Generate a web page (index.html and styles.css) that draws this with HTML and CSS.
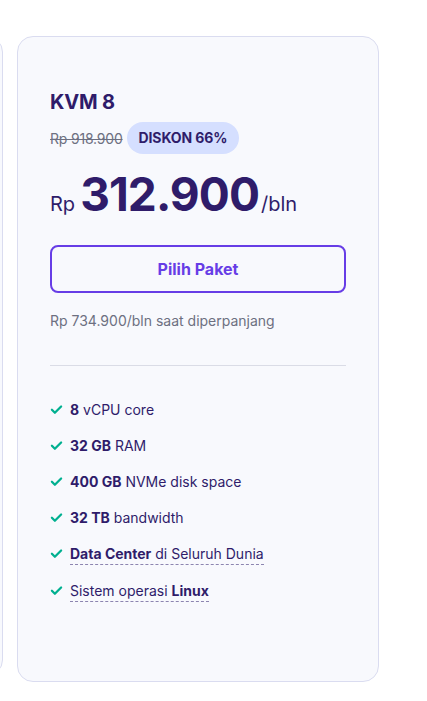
FILE: index.html
```html
<!DOCTYPE html>
<html lang="id">
<head>
<meta charset="utf-8">
<link rel="stylesheet" href="styles.css">
</head>
<body>
<div class="track">
  <div class="card card-prev"></div>
  <div class="card">
    <h2 class="title">KVM 8</h2>
    <div class="discount-row">
      <span class="old-price">Rp 918.900</span>
      <span class="badge">DISKON 66%</span>
    </div>
    <div class="price">
      <span class="cur">Rp</span><span class="amount">312.900</span><span class="per">/bln</span>
    </div>
    <button class="btn">Pilih Paket</button>
    <p class="renew">Rp 734.900/bln saat diperpanjang</p>
    <hr class="divider">
    <ul class="features">
      <li><svg class="check" viewBox="0 0 24 24"><path d="M3.5 12.5l5.5 5.5L20.5 6.5" /></svg><span><b>8</b> vCPU core</span></li>
      <li><svg class="check" viewBox="0 0 24 24"><path d="M3.5 12.5l5.5 5.5L20.5 6.5" /></svg><span><b>32 GB</b> RAM</span></li>
      <li><svg class="check" viewBox="0 0 24 24"><path d="M3.5 12.5l5.5 5.5L20.5 6.5" /></svg><span><b>400 GB</b> NVMe disk space</span></li>
      <li><svg class="check" viewBox="0 0 24 24"><path d="M3.5 12.5l5.5 5.5L20.5 6.5" /></svg><span><b>32 TB</b> bandwidth</span></li>
      <li><svg class="check" viewBox="0 0 24 24"><path d="M3.5 12.5l5.5 5.5L20.5 6.5" /></svg><span class="dashed"><b>Data Center</b> di Seluruh Dunia</span></li>
      <li><svg class="check" viewBox="0 0 24 24"><path d="M3.5 12.5l5.5 5.5L20.5 6.5" /></svg><span class="dashed">Sistem operasi <b>Linux</b></span></li>
    </ul>
  </div>
</div>
</body>
</html>
```

FILE: styles.css
```css
* { box-sizing: border-box; }
html, body { margin: 0; padding: 0; background: #ffffff; }
body {
  font-family: Inter, "Noto Sans", sans-serif;
  color: #2f1c6a;
  overflow: hidden;
}
.track {
  display: flex;
  align-items: flex-start;
  gap: 14px;
  padding-top: 36px;
}
.card {
  flex: 0 0 362px;
  width: 362px;
  height: 646px;
  background: #f8f9fd;
  border: 1px solid #dadcf0;
  border-radius: 16px;
  padding: 53px 32px 32px;
}
.card-prev {
  margin-left: -359px;
  height: 640px;
}
.title {
  margin: 0;
  font-size: 20px;
  line-height: 24px;
  font-weight: 700;
  color: #2f1c6a;
  letter-spacing: -0.2px;
}
.discount-row {
  display: flex;
  align-items: center;
  gap: 4px;
  margin-top: 8px;
}
.old-price {
  font-size: 14px;
  color: #6d7081;
  text-decoration: line-through;
  letter-spacing: -0.2px;
}
.badge {
  background: #d5dfff;
  color: #2f1c6a;
  font-weight: 700;
  font-size: 14px;
  line-height: 20px;
  padding: 6px 12px;
  border-radius: 16px;
  letter-spacing: -0.1px;
}
.price {
  display: flex;
  align-items: baseline;
  margin-top: 10px;
  color: #2f1c6a;
}
.cur { font-size: 20px; margin-right: 5px; }
.amount { font-size: 46px; font-weight: 700; line-height: 60px; letter-spacing: -0.9px; }
.per { font-size: 20px; margin-left: 2px; }
.btn {
  display: block;
  width: 100%;
  margin-top: 21px;
  height: 48px;
  background: transparent;
  border: 2px solid #673de6;
  border-radius: 8px;
  color: #673de6;
  font-family: inherit;
  font-size: 16px;
  font-weight: 700;
}
.renew {
  margin: 18px 0 0;
  font-size: 14px;
  line-height: 20px;
  color: #6d7081;
}
.divider {
  margin: 34px 0 0;
  border: 0;
  border-top: 1px solid #dadce6;
}
.features {
  list-style: none;
  margin: 34px 0 0;
  padding: 0;
  display: flex;
  flex-direction: column;
  gap: 16px;
}
.features li {
  display: flex;
  align-items: center;
  gap: 7px;
  font-size: 14px;
  line-height: 20px;
  color: #2f1c6a;
}
.features b { font-weight: 700; }
.check {
  width: 13px;
  height: 13px;
  fill: none;
  stroke: #00b090;
  stroke-width: 4.2;
  stroke-linecap: round;
  stroke-linejoin: round;
  flex: 0 0 13px;
  margin-top: -2px;
}
.dashed {
  border-bottom: 1px dashed #8c85b0;
  line-height: 19px;
  padding-bottom: 1px;
}
```
